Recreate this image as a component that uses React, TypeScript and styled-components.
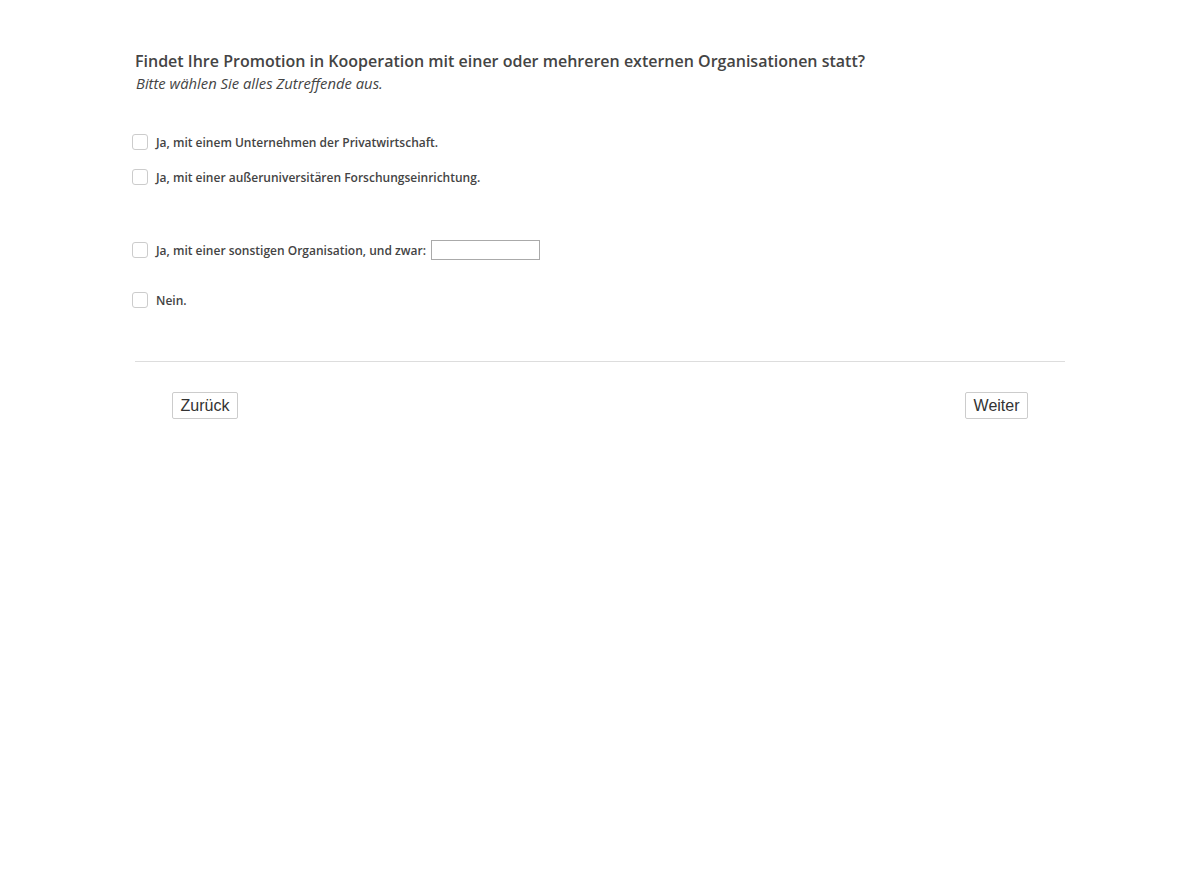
import React from "react";
import styled, { createGlobalStyle } from "styled-components";

const Global = createGlobalStyle`
  html, body { margin: 0; padding: 0; background: #fff; }
  body { font-family: "Open Sans", "Liberation Sans", sans-serif; color: #444; }
`;

const Page = styled.main`
  width: 930px;
  margin-left: 135px;
  padding-top: 50px;
`;

const Header = styled.header`
  display: flex;
  flex-direction: column;
`;

const Title = styled.h1`
  margin: 0;
  font-size: 16px;
  line-height: 22px;
  font-weight: 600;
  color: #444;
`;

const Hint = styled.p`
  margin: 0;
  padding-left: 1px;
  font-size: 14.8px;
  line-height: 22px;
  font-style: italic;
  color: #444;
`;

const OptionList = styled.div`
  display: flex;
  flex-direction: column;
  margin-left: -3px;
  margin-top: 36px;
`;

const OptionRow = styled.label<{ $gap: number }>`
  display: flex;
  align-items: center;
  gap: 8px;
  height: 24px;
  margin-top: ${(p) => p.$gap}px;
  font-size: 12px;
  font-weight: 600;
  color: #444;
  cursor: pointer;
`;

const Box = styled.span`
  width: 14px;
  height: 14px;
  border: 1px solid #ccc;
  border-radius: 3px;
  background: #fff;
  flex: none;
`;

const TextField = styled.input`
  width: 103px;
  height: 16px;
  margin-left: -3px;
  border: 1px solid #aaa;
  padding: 1px 2px;
  font-family: "Open Sans", sans-serif;
  font-size: 12px;
`;

const Divider = styled.hr`
  margin: 49px 0 0;
  border: none;
  border-top: 1px solid #ddd;
`;

const Footer = styled.nav`
  display: flex;
  justify-content: space-between;
  padding: 30px 37px 0;
`;

const NavButton = styled.button`
  font-family: "Liberation Sans", Arial, sans-serif;
  font-size: 16px;
  line-height: 19px;
  padding: 3px 7.5px;
  color: #333;
  background: #fff;
  border: 1px solid #ccc;
  border-radius: 2px;
`;

const options = [
  { text: "Ja, mit einem Unternehmen der Privatwirtschaft.", gap: 0 },
  { text: "Ja, mit einer außeruniversitären Forschungseinrichtung.", gap: 11 },
  { text: "Ja, mit einer sonstigen Organisation, und zwar:", gap: 49, input: true },
  { text: "Nein.", gap: 26 },
];

export default function App() {
  return (
    <>
      <Global />
      <Page>
        <Header>
          <Title>Findet Ihre Promotion in Kooperation mit einer oder mehreren externen Organisationen statt?</Title>
          <Hint>Bitte wählen Sie alles Zutreffende aus.</Hint>
        </Header>
        <OptionList>
          {options.map((o) => (
            <OptionRow key={o.text} $gap={o.gap}>
              <Box />
              <span>{o.text}</span>
              {o.input && <TextField type="text" />}
            </OptionRow>
          ))}
        </OptionList>
        <Divider />
        <Footer>
          <NavButton>Zurück</NavButton>
          <NavButton>Weiter</NavButton>
        </Footer>
      </Page>
    </>
  );
}
